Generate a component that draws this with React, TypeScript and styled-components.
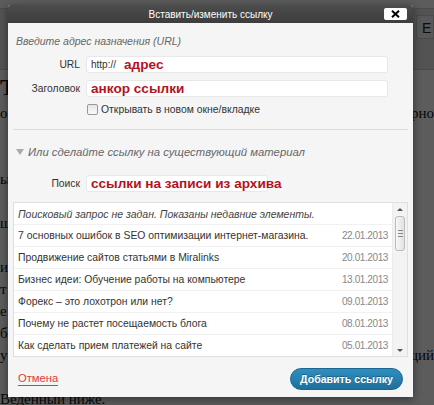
import styled, { createGlobalStyle } from "styled-components"

const GlobalStyle = createGlobalStyle`
  html, body { margin: 0; padding: 0; }
  body {
    width: 434px;
    height: 405px;
    overflow: hidden;
    background: #fff;
    font-family: "Liberation Sans", Arial, sans-serif;
  }
`

/* page behind the modal */
const Page = styled.div`
  position: relative;
  width: 434px;
  height: 405px;
  overflow: hidden;
  background: #fff;
`

const EditorBar = styled.div`
  height: 62px;
  margin-top: 8px;
  background: #e6e6e6;
  border-top: 1px solid #cfcfcf;
  border-bottom: 1px solid #cfcfcf;
  display: flex;
  justify-content: flex-end;
  align-items: flex-start;
  padding: 6px 0 0 0;
  box-sizing: border-box;
`

const EditorTab = styled.div`
  width: 18px;
  height: 24px;
  background: #f4f4f4;
  border: 1px solid #ccc;
  font: 14px "Liberation Sans", Arial, sans-serif;
  color: #222;
  padding: 4px 0 0 5px;
  box-sizing: border-box;
`

const Article = styled.div`
  padding: 2px 0 0 0;
  font-family: "Liberation Serif", "Times New Roman", serif;
  font-size: 15px;
  line-height: 22px;
  color: #111;
  white-space: nowrap;
`

const Heading = styled.div`
  font-size: 24px;
  font-weight: bold;
  line-height: 30px;
`

const Line = styled.div`
  height: 22px;
  display: flex;
  justify-content: space-between;
`

const Overlay = styled.div`
  position: absolute;
  inset: 0;
  background: rgba(0, 0, 0, 0.64);
`

/* modal */
const Dialog = styled.div`
  position: absolute;
  left: 8px;
  top: 5px;
  width: 405px;
  height: 392px;
  background: #f5f5f5;
  border-radius: 3px 3px 0 0;
  box-shadow: 0 2px 8px rgba(0, 0, 0, 0.45);
  display: flex;
  flex-direction: column;
`

const TitleBar = styled.div`
  position: relative;
  height: 18px;
  flex: none;
  background: linear-gradient(#4c4c4c, #3d3d3d);
  border-radius: 3px 3px 0 0;
  color: #fff;
  font-size: 10px;
  display: flex;
  align-items: center;
  justify-content: center;
`

const CloseButton = styled.div`
  position: absolute;
  right: 6px;
  top: 3px;
  width: 23px;
  height: 12px;
  background: #fff;
  border-radius: 2px;
  display: flex;
  align-items: center;
  justify-content: center;
`

const Body = styled.div`
  flex: none;
  padding: 0 5px;
  display: flex;
  flex-direction: column;
`

const Hint = styled.div<{ $top: number; $size: number }>`
  margin: ${(p) => p.$top}px 0 0 3px;
  font-size: ${(p) => p.$size}px;
  line-height: 14px;
  font-style: italic;
  color: #666;
  display: flex;
  align-items: center;
  gap: 4px;
`

const FieldRow = styled.div<{ $top: number }>`
  margin-top: ${(p) => p.$top}px;
  display: grid;
  grid-template-columns: 67px auto;
  column-gap: 6px;
  align-items: center;
  justify-content: start;
`

const Label = styled.label`
  text-align: right;
  font-size: 10.3px;
  color: #333;
`

const Field = styled.div<{ $width: number }>`
  width: ${(p) => p.$width}px;
  height: 17px;
  box-sizing: border-box;
  background: #fff;
  border: 1px solid #e8e8e8;
  border-radius: 3px;
  padding: 0 4px;
  display: flex;
  align-items: center;
  gap: 8px;
  font-size: 10px;
  color: #333;
  white-space: nowrap;
`

const RedText = styled.span`
  font-weight: bold;
  font-size: 13.6px;
  color: #b4121c;
`

const CheckRow = styled.div`
  margin: 7px 0 0 74px;
  display: flex;
  align-items: center;
  gap: 3px;
  font-size: 10.4px;
  color: #333;
`

const CheckBox = styled.span`
  width: 9px;
  height: 9px;
  border: 1px solid #999;
  border-radius: 2px;
  background: linear-gradient(#e6e6e6, #fafafa);
`

const Separator = styled.div`
  margin-top: 14px;
  border-top: 1px solid #dedede;
`

const Triangle = styled.span`
  width: 0;
  height: 0;
  border-left: 4px solid transparent;
  border-right: 4px solid transparent;
  border-top: 6px solid #aaa;
`

const ListBox = styled.div`
  margin-top: 10px;
  height: 155px;
  box-sizing: border-box;
  background: #fff;
  border: 1px solid #dfdfdf;
  display: flex;
`

const Rows = styled.div`
  flex: 1;
  overflow: hidden;
`

const Row = styled.div<{ $note?: boolean }>`
  height: 22px;
  box-sizing: border-box;
  padding: 0 4px 0 4px;
  display: flex;
  align-items: center;
  justify-content: space-between;
  border-bottom: 1px solid #f1f1f1;
  font-size: ${(p) => (p.$note ? "10.5px" : "10.4px")};
  color: ${(p) => (p.$note ? "#444" : "#333")};
  font-style: ${(p) => (p.$note ? "italic" : "normal")};
  white-space: nowrap;
`

const DateText = styled.span`
  color: #888;
  font-size: 10px;
  letter-spacing: -0.4px;
`

const ScrollBar = styled.div`
  width: 14px;
  flex: none;
  background: #f3f3f3;
  border-left: 1px solid #ececec;
  display: flex;
  flex-direction: column;
  align-items: center;
`

const Arrow = styled.div<{ $down?: boolean }>`
  height: 12px;
  width: 14px;
  display: flex;
  align-items: center;
  justify-content: center;
  &::before {
    content: "";
    border-left: 3px solid transparent;
    border-right: 3px solid transparent;
    ${(p) => (p.$down ? "border-top: 3px solid #555;" : "border-bottom: 3px solid #555;")}
  }
`

const Thumb = styled.div`
  width: 10px;
  height: 35px;
  margin-top: 1px;
  box-sizing: border-box;
  border: 1px solid #bbb;
  border-radius: 3px;
  background: linear-gradient(90deg, #f7f7f7, #e2e2e2);
  display: flex;
  align-items: center;
  justify-content: center;
`

const Grip = styled.div`
  width: 5px;
  height: 5px;
  border-top: 1px solid #888;
  border-bottom: 1px solid #888;
  position: relative;
  &::after {
    content: "";
    position: absolute;
    left: 0;
    right: 0;
    top: 2px;
    border-top: 1px solid #888;
  }
`

const Spacer = styled.div`
  flex: 1;
`

const Footer = styled.div`
  flex: 1;
  padding: 4px 10px 0 10px;
  display: flex;
  align-items: center;
  justify-content: space-between;
`

const CancelLink = styled.span`
  font-size: 11.2px;
  color: #e23a3a;
  border-bottom: 1px solid #e23a3a;
  padding-bottom: 1px;
`

const SubmitButton = styled.div`
  height: 20px;
  padding: 0 9px;
  border-radius: 11px;
  background: linear-gradient(#2f8fbf, #1f6f9c);
  border: 1px solid #1b6792;
  color: #fff;
  font-weight: bold;
  font-size: 10.6px;
  display: flex;
  align-items: center;
  text-shadow: 0 -1px 0 rgba(0, 0, 0, 0.3);
`

const posts = [
  ["7 основных ошибок в SEO оптимизации интернет-магазина.", "22.01.2013"],
  ["Продвижение сайтов статьями в Miralinks", "20.01.2013"],
  ["Бизнес идеи: Обучение работы на компьютере", "13.01.2013"],
  ["Форекс – это лохотрон или нет?", "09.01.2013"],
  ["Почему не растет посещаемость блога", "08.01.2013"],
  ["Как сделать прием платежей на сайте", "05.01.2013"],
]

// fragments of the page text that peek out on both sides of the modal
const pageLines: [string, string][] = [
  ["ом", "орно"],
  ["", ""],
  ["", ""],
  ["ы/", ""],
  ["", ""],
  ["ш", ""],
  ["", ""],
  ["и", ""],
  ["т", ""],
  ["е:", ""],
  ["бь", ""],
  ["у", "щий"],
  ["", ""],
  ["Веденный ниже.", ""],
]

const App = () => {
  return (
    <>
      <GlobalStyle />
      <Page>
        <EditorBar>
          <EditorTab>E</EditorTab>
        </EditorBar>
        <Article>
          <Heading>Т</Heading>
          {pageLines.map(([left, right], i) => (
            <Line key={i}>
              <span>{left}</span>
              <span>{right}</span>
            </Line>
          ))}
        </Article>
        <Overlay />
        <Dialog>
          <TitleBar>
            Вставить/изменить ссылку
            <CloseButton>
              <svg width="9" height="8" viewBox="0 0 9 8">
                <path d="M1 0.8 L8 7.2 M8 0.8 L1 7.2" stroke="#000" strokeWidth="2" />
              </svg>
            </CloseButton>
          </TitleBar>
          <Body>
            <Hint $top={11} $size={10.5}>Введите адрес назначения (URL)</Hint>
            <FieldRow $top={8}>
              <Label>URL</Label>
              <Field $width={302}>
                http://<RedText>адрес</RedText>
              </Field>
            </FieldRow>
            <FieldRow $top={7}>
              <Label>Заголовок</Label>
              <Field $width={302}>
                <RedText>анкор ссылки</RedText>
              </Field>
            </FieldRow>
            <CheckRow>
              <CheckBox />
              Открывать в новом окне/вкладке
            </CheckRow>
            <Separator />
            <Hint $top={15} $size={11.3}>
              <Triangle />
              Или сделайте ссылку на существующий материал
            </Hint>
            <FieldRow $top={16}>
              <Label>Поиск</Label>
              <Field $width={182}>
                <RedText>ссылки на записи из архива</RedText>
              </Field>
            </FieldRow>
            <ListBox>
              <Rows>
                <Row $note>Поисковый запрос не задан. Показаны недавние элементы.</Row>
                {posts.map(([title, date]) => (
                  <Row key={date}>
                    <span>{title}</span>
                    <DateText>{date}</DateText>
                  </Row>
                ))}
              </Rows>
              <ScrollBar>
                <Arrow />
                <Thumb>
                  <Grip />
                </Thumb>
                <Spacer />
                <Arrow $down />
              </ScrollBar>
            </ListBox>
          </Body>
          <Footer>
            <CancelLink>Отмена</CancelLink>
            <SubmitButton>Добавить ссылку</SubmitButton>
          </Footer>
        </Dialog>
      </Page>
    </>
  )
}

export default App
